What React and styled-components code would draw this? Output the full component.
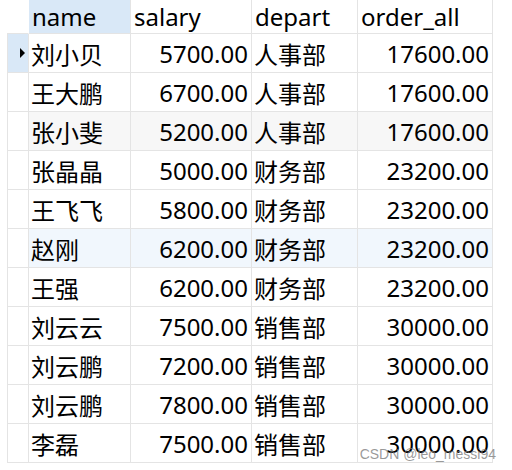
import styled, { createGlobalStyle } from "styled-components";

const rows = [
  { name: "刘小贝", salary: "5700.00", depart: "人事部", total: "17600.00", current: true },
  { name: "王大鹏", salary: "6700.00", depart: "人事部", total: "17600.00" },
  { name: "张小斐", salary: "5200.00", depart: "人事部", total: "17600.00", tone: "grey" },
  { name: "张晶晶", salary: "5000.00", depart: "财务部", total: "23200.00" },
  { name: "王飞飞", salary: "5800.00", depart: "财务部", total: "23200.00" },
  { name: "赵刚", salary: "6200.00", depart: "财务部", total: "23200.00", tone: "blue" },
  { name: "王强", salary: "6200.00", depart: "财务部", total: "23200.00" },
  { name: "刘云云", salary: "7500.00", depart: "销售部", total: "30000.00" },
  { name: "刘云鹏", salary: "7200.00", depart: "销售部", total: "30000.00" },
  { name: "刘云鹏", salary: "7800.00", depart: "销售部", total: "30000.00" },
  { name: "李磊", salary: "7500.00", depart: "销售部", total: "30000.00" },
];

const tones = { grey: "#f7f7f7", blue: "#f1f7fd" };

const App = () => {
  return (
    <Page>
      <GlobalStyle />
      <Grid>
        <HeadCell $gutter />
        <HeadCell $active>name</HeadCell>
        <HeadCell>salary</HeadCell>
        <HeadCell>depart</HeadCell>
        <HeadCell>order_all</HeadCell>
        {rows.map((r, i) => (
          <Row key={i}>
            <Gutter $current={r.current}>{r.current && <Pointer />}</Gutter>
            <Cell $bg={tones[r.tone]}>{r.name}</Cell>
            <Cell $bg={tones[r.tone]} $right>{r.salary}</Cell>
            <Cell $bg={tones[r.tone]}>{r.depart}</Cell>
            <Cell $bg={tones[r.tone]} $right>{r.total}</Cell>
          </Row>
        ))}
      </Grid>
      <Watermark>CSDN @leo_messi94</Watermark>
    </Page>
  );
};

const GlobalStyle = createGlobalStyle`
  html, body {
    margin: 0;
    background: #ffffff;
  }
`;

const Page = styled.div`
  position: relative;
  width: 512px;
  height: 470px;
  overflow: hidden;
  padding-left: 7px;
  box-sizing: border-box;
  font-family: "Noto Sans", "Noto Sans CJK SC", sans-serif;
  font-size: 24px;
  color: #000;
`;

const Grid = styled.div`
  display: grid;
  grid-template-columns: 22px 102px 121px 106px 135px;
  grid-auto-rows: 39px;
  grid-template-rows: 34px;
`;

const Row = styled.div`
  display: contents;
`;

const HeadCell = styled.div`
  display: flex;
  align-items: center;
  padding: 0 3px;
  border-right: 1px solid ${p => p.$gutter ? "#ffffff" : "#e4e4e4"};
  border-bottom: 1px solid #e4e4e4;
  background: ${p => p.$active ? "#d9e8f7" : "#ffffff"};
  white-space: nowrap;
  overflow: hidden;
`;

const Gutter = styled.div`
  display: flex;
  align-items: center;
  justify-content: flex-end;
  padding-right: 3px;
  border-left: 1px solid #e4e4e4;
  border-right: 1px solid #e4e4e4;
  border-bottom: 1px solid #e4e4e4;
  background: ${p => p.$current ? "#d9e8f7" : "#ffffff"};
`;

const Pointer = styled.span`
  width: 0;
  height: 0;
  border-top: 5px solid transparent;
  border-bottom: 5px solid transparent;
  border-left: 5px solid #000;
`;

const Cell = styled.div`
  display: flex;
  align-items: center;
  justify-content: ${p => p.$right ? "flex-end" : "flex-start"};
  padding: 0 ${p => p.$right ? "3px" : "2px"};
  border-right: 1px solid #e4e4e4;
  border-bottom: 1px solid #e4e4e4;
  background: ${p => p.$bg || "#ffffff"};
  white-space: nowrap;
  overflow: hidden;
`;

const Watermark = styled.div`
  position: absolute;
  right: 16px;
  bottom: 8px;
  font-family: "Liberation Sans", Arial, sans-serif;
  font-size: 14px;
  color: rgba(120, 120, 120, 0.75);
`;

export default App;
